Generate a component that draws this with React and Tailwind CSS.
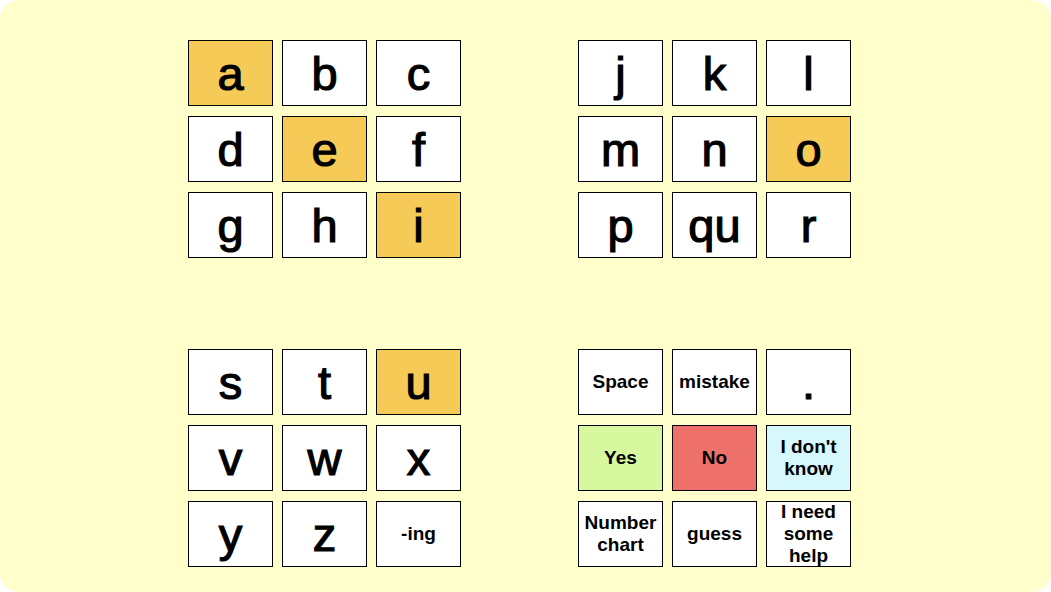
import React from 'react';

const ORANGE = 'bg-[#f6ca56]';

const grids = [
  [
    { t: 'a', bg: ORANGE }, { t: 'b' }, { t: 'c' },
    { t: 'd' }, { t: 'e', bg: ORANGE }, { t: 'f' },
    { t: 'g' }, { t: 'h' }, { t: 'i', bg: ORANGE },
  ],
  [
    { t: 'j' }, { t: 'k' }, { t: 'l' },
    { t: 'm' }, { t: 'n' }, { t: 'o', bg: ORANGE },
    { t: 'p' }, { t: 'qu' }, { t: 'r' },
  ],
  [
    { t: 's' }, { t: 't' }, { t: 'u', bg: ORANGE },
    { t: 'v' }, { t: 'w' }, { t: 'x' },
    { t: 'y' }, { t: 'z' }, { t: '-ing', small: true },
  ],
  [
    { t: 'Space', small: true }, { t: 'mistake', small: true }, { t: '.' },
    { t: 'Yes', small: true, bg: 'bg-[#d8f8a0]' }, { t: 'No', small: true, bg: 'bg-[#ee706a]' }, { t: ["I don't", 'know'], small: true, bg: 'bg-[#d6f8fc]' },
    { t: ['Number', 'chart'], small: true }, { t: 'guess', small: true }, { t: ['I need', 'some', 'help'], small: true },
  ],
];

function Cell({ cell }) {
  const lines = Array.isArray(cell.t) ? cell.t : [cell.t];
  return (
    <div
      className={`w-[85px] h-[66px] border border-black flex flex-col items-center justify-center text-black overflow-visible ${cell.bg || 'bg-white'} ${
        cell.small
          ? 'text-[19px] font-bold leading-[22px]'
          : 'text-[47px] leading-none [-webkit-text-stroke:1.2px_black]'
      }`}
    >
      {lines.map((l) => (
        <span key={l} className="whitespace-nowrap">{l}</span>
      ))}
    </div>
  );
}

export default function App() {
  return (
    <div className="w-[1051px] h-[592px] bg-white" style={{ fontFamily: '"Liberation Sans", Arial, sans-serif' }}>
      <div className="w-full h-full rounded-[20px] bg-[#ffffcc] pl-[188px] pt-[40px]">
        <div className="grid grid-cols-[273px_273px] gap-x-[117px] gap-y-[91px]">
          {grids.map((g, i) => (
            <div key={i} className="grid grid-cols-[85px_85px_85px] gap-x-[9px] gap-y-[10px]">
              {g.map((c, j) => (
                <Cell key={j} cell={c} />
              ))}
            </div>
          ))}
        </div>
      </div>
    </div>
  );
}
